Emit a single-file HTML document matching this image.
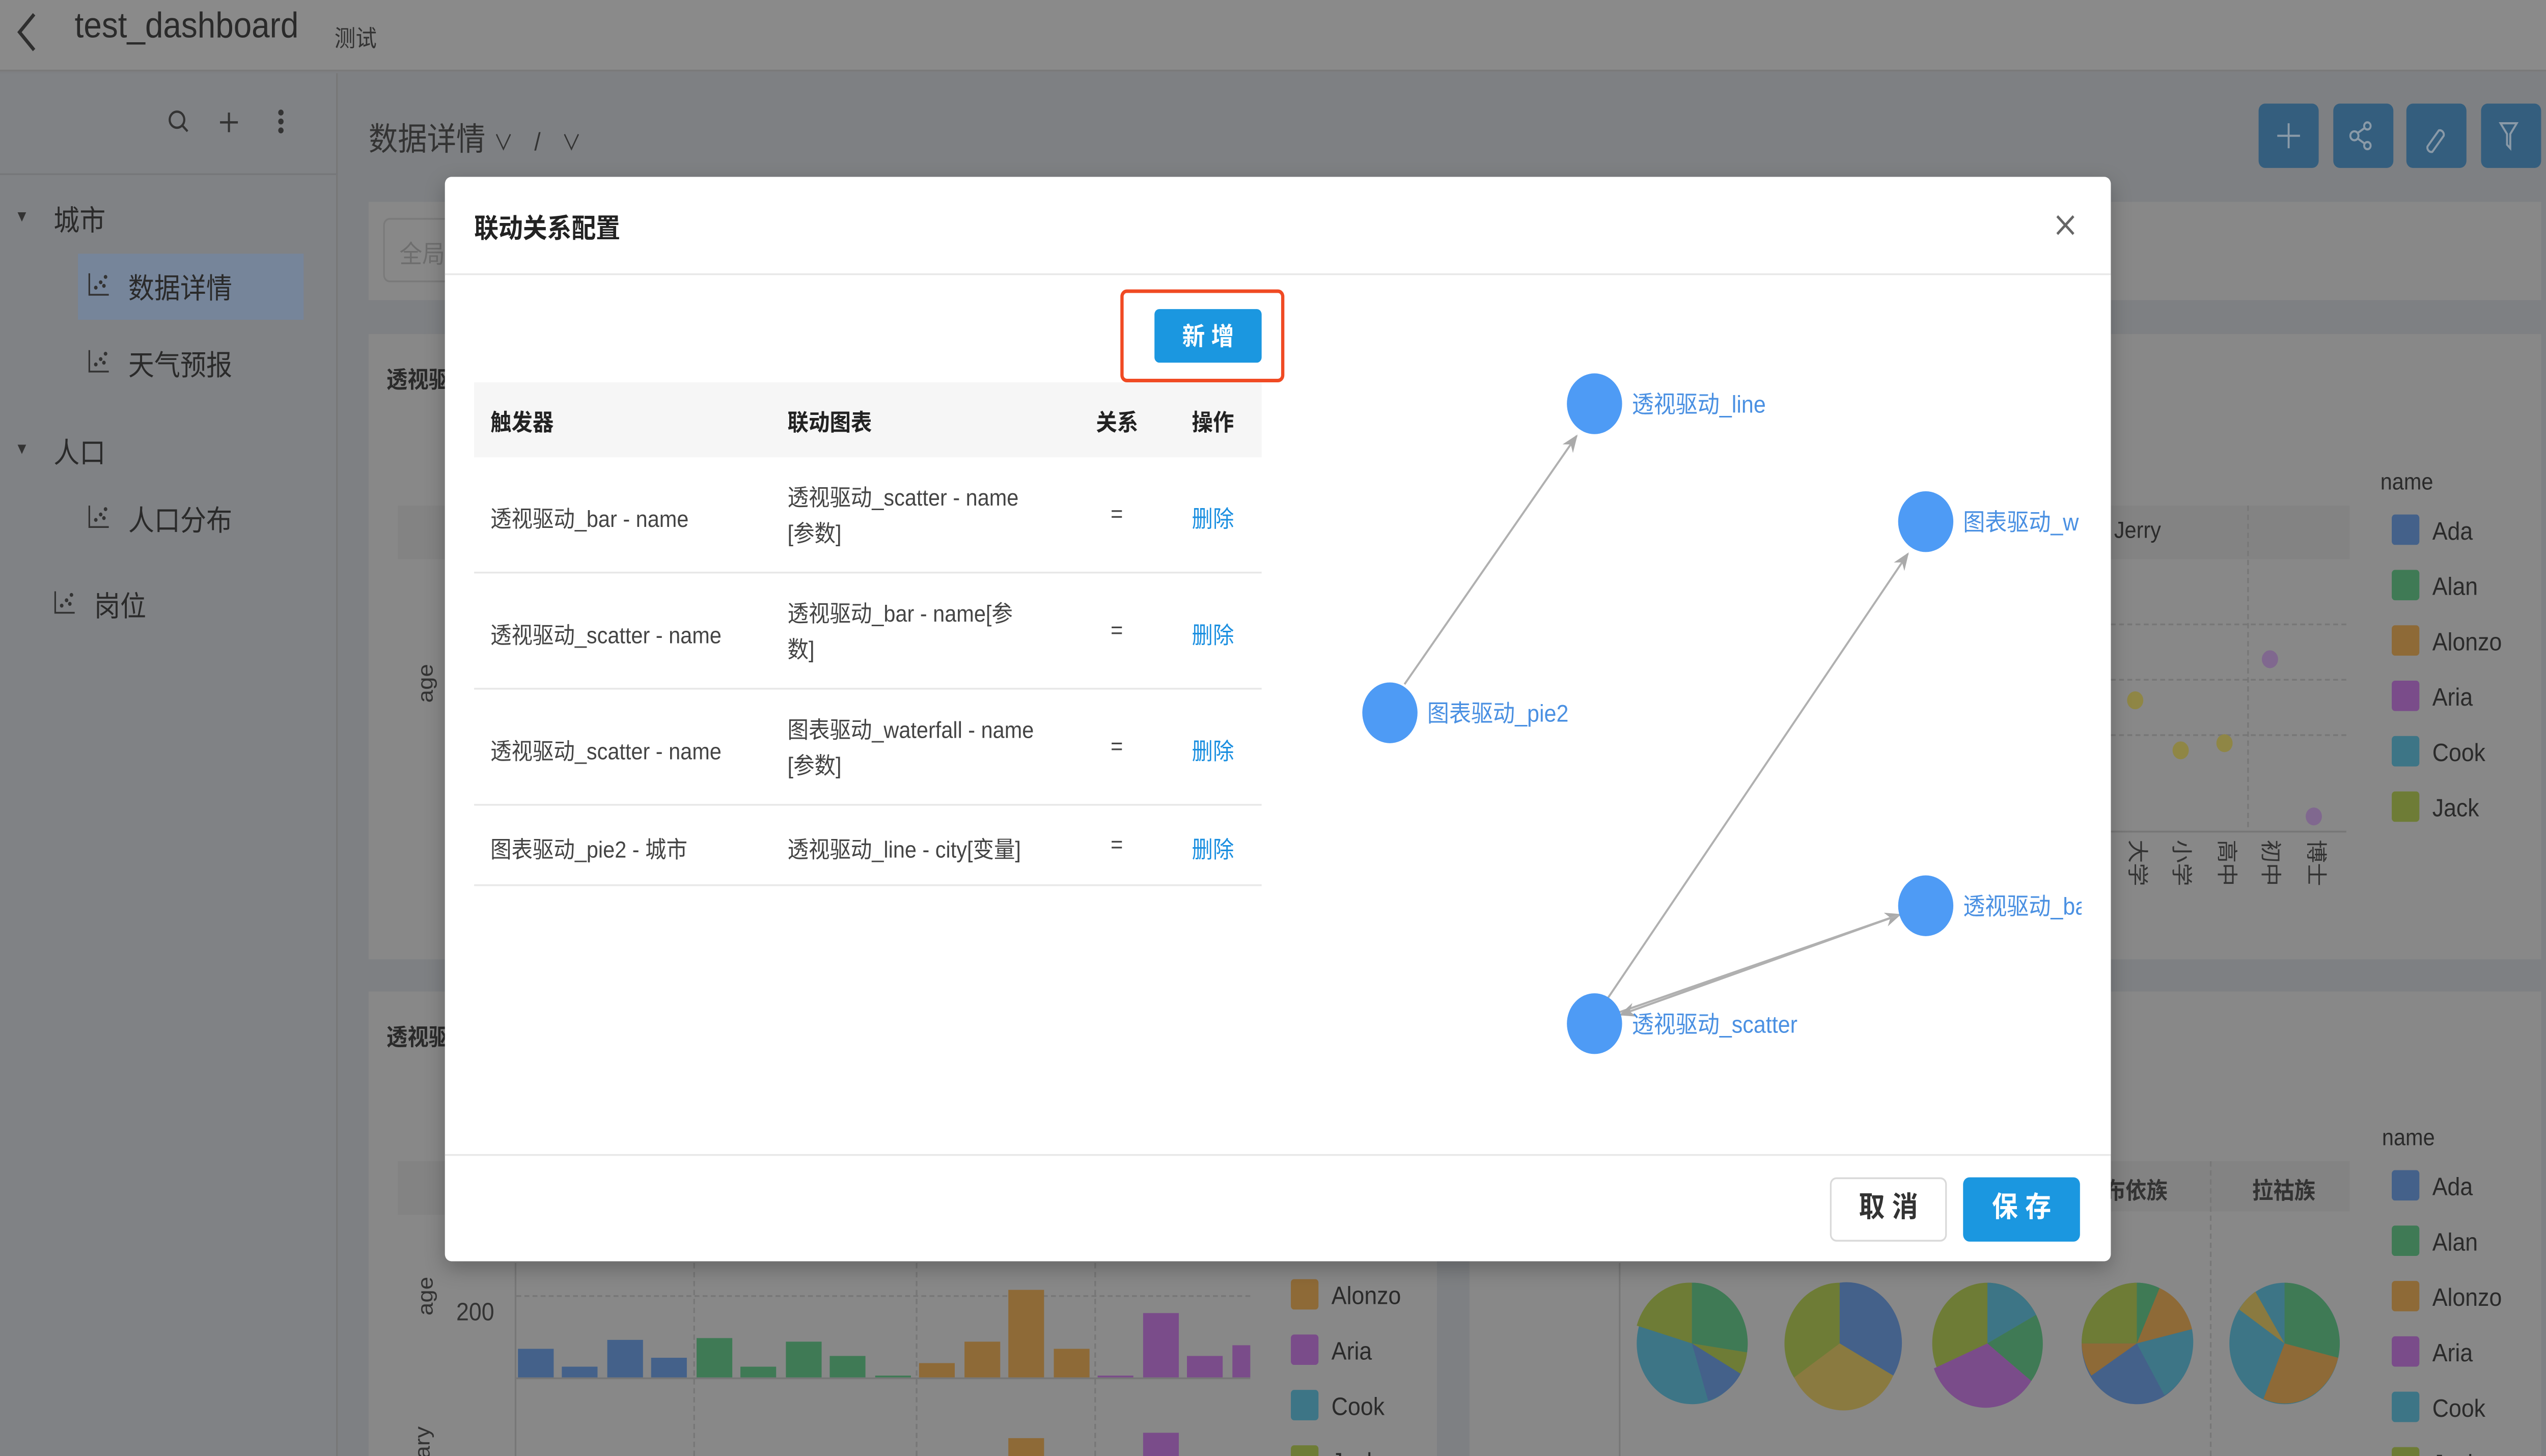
<!DOCTYPE html>
<html><head><meta charset="utf-8"><style>
*{margin:0;padding:0;box-sizing:border-box}
html,body{width:100%;height:100%;overflow:hidden;background:#7e8083}
#w{position:absolute;left:0;top:0;width:1568px;height:815px;transform:scale(3.5077);transform-origin:0 0;overflow:hidden;font-family:"Liberation Sans","Noto Sans CJK SC",sans-serif;color:#333}
.a{position:absolute}
.t{position:absolute;white-space:nowrap}
.v{writing-mode:vertical-rl;text-orientation:sideways}
</style></head><body><div id="w">
<div class="a" style="left:0;top:0;width:1568px;height:40px;background:#8a8a8a;border-bottom:1px solid #7a7a7a"></div>
<svg class="a" style="left:6px;top:6px" width="20" height="24"><path d="M15 2 L6 12 L15 22" stroke="#2e2e2e" stroke-width="2" fill="none"/></svg>
<div class="t" style="left:46px;top:4px;font-size:20px;color:#2a2a2a">test_dashboard</div>
<div class="t" style="left:206px;top:11px;font-size:13px;color:#333">测试</div>
<div class="a" style="left:0;top:41px;width:208px;height:774px;background:#808285;border-right:1px solid #777"></div>
<div class="a" style="left:0;top:97px;width:208px;height:1px;background:#76777a"></div>
<svg class="a" style="left:100px;top:60px" width="90" height="18" fill="none" stroke="#333" stroke-width="1.3"><circle cx="9" cy="7" r="4.5"/><path d="M12.5 10.5l3 3"/><path d="M41 3v11M35.5 8.5h11"/><circle cx="73" cy="3" r="1" fill="#333"/><circle cx="73" cy="8" r="1" fill="#333"/><circle cx="73" cy="13" r="1" fill="#333"/></svg>
<div class="a" style="left:48px;top:142px;width:139px;height:37px;background:#76859a"></div>
<div class="t" style="left:9px;top:116px;font-size:9px;color:#333">▼</div>
<div class="t" style="left:33px;top:110px;font-size:16px;color:#2a2a2a">城市</div>
<div class="t" style="left:9px;top:246px;font-size:9px;color:#333">▼</div>
<div class="t" style="left:33px;top:240px;font-size:16px;color:#2a2a2a">人口</div>
<svg class="a" style="left:54px;top:152px" width="14" height="14" fill="none" stroke="#333" stroke-width="1"><path d="M1 1v12h12"/><circle cx="5" cy="9" r=".6" fill="#333"/><circle cx="8" cy="6" r=".6" fill="#333"/><circle cx="11" cy="3" r=".6" fill="#333"/><circle cx="10" cy="8" r=".6" fill="#333"/></svg>
<svg class="a" style="left:54px;top:195px" width="14" height="14" fill="none" stroke="#333" stroke-width="1"><path d="M1 1v12h12"/><circle cx="5" cy="9" r=".6" fill="#333"/><circle cx="8" cy="6" r=".6" fill="#333"/><circle cx="11" cy="3" r=".6" fill="#333"/><circle cx="10" cy="8" r=".6" fill="#333"/></svg>
<svg class="a" style="left:54px;top:282px" width="14" height="14" fill="none" stroke="#333" stroke-width="1"><path d="M1 1v12h12"/><circle cx="5" cy="9" r=".6" fill="#333"/><circle cx="8" cy="6" r=".6" fill="#333"/><circle cx="11" cy="3" r=".6" fill="#333"/><circle cx="10" cy="8" r=".6" fill="#333"/></svg>
<svg class="a" style="left:33px;top:330px" width="14" height="14" fill="none" stroke="#333" stroke-width="1"><path d="M1 1v12h12"/><circle cx="5" cy="9" r=".6" fill="#333"/><circle cx="8" cy="6" r=".6" fill="#333"/><circle cx="11" cy="3" r=".6" fill="#333"/><circle cx="10" cy="8" r=".6" fill="#333"/></svg>
<div class="t" style="left:79px;top:148px;font-size:16px;color:#2a2a2a">数据详情</div>
<div class="t" style="left:79px;top:191px;font-size:16px;color:#2a2a2a">天气预报</div>
<div class="t" style="left:79px;top:278px;font-size:16px;color:#2a2a2a">人口分布</div>
<div class="t" style="left:58px;top:326px;font-size:16px;color:#2a2a2a">岗位</div>
<div class="t" style="left:227px;top:64px;font-size:18px;color:#333">数据详情 <span style="font-size:12px">∨</span> <span style="font-size:14px;margin:0 8px">/</span> <span style="font-size:12px">∨</span></div>
<div class="a" style="left:1391px;top:58px;width:37px;height:36px;background:#345e7e;border-radius:4px"></div>
<div class="a" style="left:1437px;top:58px;width:37px;height:36px;background:#345e7e;border-radius:4px"></div>
<div class="a" style="left:1482px;top:58px;width:37px;height:36px;background:#345e7e;border-radius:4px"></div>
<div class="a" style="left:1528px;top:58px;width:37px;height:36px;background:#345e7e;border-radius:4px"></div>
<svg class="a" style="left:1391px;top:58px" width="176" height="36" fill="none" stroke="#8a9aa8" stroke-width="1.2"><path d="M18.5 11v14M11.5 18h14"/><circle cx="59" cy="18" r="2.5"/><circle cx="67" cy="12.5" r="2"/><circle cx="67" cy="23.5" r="2"/><path d="M61 16.5l4.5-3M61 19.5l4.5 3"/><path d="M104 24l7-9a2.5 2.5 0 0 1 3 3l-7 9a2.5 2.5 0 0 1-3-3z"/><path d="M149 11h10l-4 6v8l-2-2v-6z"/></svg>
<div class="a" style="left:227px;top:113px;width:1338px;height:55px;background:#888"></div>
<div class="a" style="left:236px;top:122px;width:60px;height:36px;border:1px solid #7a7a7a;border-radius:4px"></div>
<div class="t" style="left:246px;top:132px;font-size:14px;color:#6e6e6e">全局</div>
<div class="a" style="left:227px;top:187px;width:1338px;height:350px;background:#888"></div>
<div class="t" style="left:238px;top:202px;font-size:13px;font-weight:bold;color:#2a2a2a">透视驱</div>
<div class="a" style="left:245px;top:283px;width:40px;height:30px;background:#838383"></div>
<div class="t" style="left:251px;top:375px;font-size:13px;color:#333;transform:rotate(-90deg)">age</div>
<div class="a" style="left:1300px;top:283px;width:147px;height:30px;background:#838383"></div>
<div class="t" style="left:1302px;top:289px;font-size:13px;color:#2a2a2a">Jerry</div>
<div class="a" style="left:1384px;top:283px;width:1px;height:180px;border-left:1px dashed #777"></div>
<div class="a" style="left:1300px;top:349px;width:145px;border-top:1px dashed #777"></div>
<div class="a" style="left:1300px;top:380px;width:145px;border-top:1px dashed #777"></div>
<div class="a" style="left:1300px;top:411px;width:145px;border-top:1px dashed #777"></div>
<div class="a" style="left:1300px;top:465px;width:145px;border-top:1px solid #777"></div>
<svg class="a" style="left:1300px;top:350px" width="150" height="115"><circle cx="15" cy="42" r="5" fill="#8f8645"/><circle cx="43" cy="70" r="5" fill="#8f8645"/><circle cx="70" cy="66" r="5" fill="#8f8645"/><circle cx="98" cy="19" r="5" fill="#80688f"/><circle cx="125" cy="107" r="5" fill="#80688f"/></svg>
<div class="t v" style="left:1308px;top:470px;font-size:13px;color:#333">大学</div>
<div class="t v" style="left:1335px;top:470px;font-size:13px;color:#333">小学</div>
<div class="t v" style="left:1363px;top:470px;font-size:13px;color:#333">高中</div>
<div class="t v" style="left:1390px;top:470px;font-size:13px;color:#333">初中</div>
<div class="t v" style="left:1418px;top:470px;font-size:13px;color:#333">博士</div>
<div class="t" style="left:1466px;top:262px;font-size:13px;color:#2a2a2a">name</div>
<div class="a" style="left:1473px;top:282px;font-size:14px;color:#2a2a2a;line-height:31px">
<div><span style="display:inline-block;width:17px;height:17px;background:#44618a;border-radius:2px;vertical-align:-3px;margin-right:8px"></span>Ada</div>
<div><span style="display:inline-block;width:17px;height:17px;background:#3f7a55;border-radius:2px;vertical-align:-3px;margin-right:8px"></span>Alan</div>
<div><span style="display:inline-block;width:17px;height:17px;background:#8e6a37;border-radius:2px;vertical-align:-3px;margin-right:8px"></span>Alonzo</div>
<div><span style="display:inline-block;width:17px;height:17px;background:#7a4c8a;border-radius:2px;vertical-align:-3px;margin-right:8px"></span>Aria</div>
<div><span style="display:inline-block;width:17px;height:17px;background:#3d7586;border-radius:2px;vertical-align:-3px;margin-right:8px"></span>Cook</div>
<div><span style="display:inline-block;width:17px;height:17px;background:#6e7c36;border-radius:2px;vertical-align:-3px;margin-right:8px"></span>Jack</div>
</div>
<div class="a" style="left:227px;top:555px;width:658px;height:260px;background:#888"></div>
<div class="a" style="left:905px;top:555px;width:660px;height:260px;background:#888"></div>
<div class="t" style="left:238px;top:570px;font-size:13px;font-weight:bold;color:#2a2a2a">透视驱</div>
<div class="a" style="left:245px;top:650px;width:40px;height:30px;background:#838383"></div>
<div class="t" style="left:251px;top:718px;font-size:13px;color:#333;transform:rotate(-90deg)">age</div>
<div class="t" style="left:281px;top:726px;font-size:14px;color:#333">200</div>
<div class="t" style="left:251px;top:800px;font-size:13px;color:#333;transform:rotate(-90deg)">ary</div>
<div class="a" style="left:317px;top:707px;width:1px;height:108px;background:#777"></div>
<div class="a" style="left:318px;top:725px;width:452px;border-top:1px dashed #777"></div>
<div class="a" style="left:427px;top:707px;height:108px;border-left:1px dashed #777"></div>
<div class="a" style="left:564px;top:707px;height:108px;border-left:1px dashed #777"></div>
<div class="a" style="left:674px;top:707px;height:108px;border-left:1px dashed #777"></div>
<div class="a" style="left:318px;top:771px;width:452px;height:1px;background:#777"></div>
<svg class="a" style="left:318px;top:700px" width="460" height="115">
<rect x="1" y="55" width="22" height="16" fill="#44618a"/><rect x="28" y="65" width="22" height="6" fill="#44618a"/><rect x="56" y="50" width="22" height="21" fill="#44618a"/><rect x="83" y="60" width="22" height="11" fill="#44618a"/>
<rect x="111" y="49" width="22" height="22" fill="#3f7a55"/><rect x="138" y="65" width="22" height="6" fill="#3f7a55"/><rect x="166" y="51" width="22" height="20" fill="#3f7a55"/><rect x="193" y="59" width="22" height="12" fill="#3f7a55"/><rect x="221" y="70" width="22" height="1" fill="#3f7a55"/>
<rect x="248" y="63" width="22" height="8" fill="#8e6a37"/><rect x="276" y="51" width="22" height="20" fill="#8e6a37"/><rect x="303" y="22" width="22" height="49" fill="#8e6a37"/><rect x="331" y="55" width="22" height="16" fill="#8e6a37"/>
<rect x="358" y="70" width="22" height="1" fill="#7a4c8a"/><rect x="386" y="35" width="22" height="36" fill="#7a4c8a"/><rect x="413" y="59" width="22" height="12" fill="#7a4c8a"/><rect x="441" y="53" width="11" height="18" fill="#7a4c8a"/>
<rect x="303" y="105" width="22" height="10" fill="#8e6a37"/><rect x="386" y="102" width="22" height="13" fill="#7a4c8a"/></svg>
<div class="a" style="left:795px;top:710px;font-size:14px;color:#2a2a2a;line-height:31px">
<div><span style="display:inline-block;width:17px;height:17px;background:#8e6a37;border-radius:2px;vertical-align:-3px;margin-right:8px"></span>Alonzo</div>
<div><span style="display:inline-block;width:17px;height:17px;background:#7a4c8a;border-radius:2px;vertical-align:-3px;margin-right:8px"></span>Aria</div>
<div><span style="display:inline-block;width:17px;height:17px;background:#3d7586;border-radius:2px;vertical-align:-3px;margin-right:8px"></span>Cook</div>
<div><span style="display:inline-block;width:17px;height:17px;background:#6e7c36;border-radius:2px;vertical-align:-3px;margin-right:8px"></span>Jack</div>
</div>
<div class="a" style="left:1290px;top:650px;width:157px;height:28px;background:#838383"></div>
<div class="t" style="left:1296px;top:656px;font-size:13px;font-weight:bold;color:#333">布依族</div>
<div class="t" style="left:1387px;top:656px;font-size:13px;font-weight:bold;color:#333">拉祜族</div>
<div class="a" style="left:1361px;top:650px;height:165px;border-left:1px dashed #777"></div>
<div class="a" style="left:997px;top:707px;height:108px;border-left:1px solid #777"></div>
<div class="t" style="left:1467px;top:629px;font-size:13px;color:#2a2a2a">name</div>
<div class="a" style="left:1473px;top:649px;font-size:14px;color:#2a2a2a;line-height:31px">
<div><span style="display:inline-block;width:17px;height:17px;background:#44618a;border-radius:2px;vertical-align:-3px;margin-right:8px"></span>Ada</div>
<div><span style="display:inline-block;width:17px;height:17px;background:#3f7a55;border-radius:2px;vertical-align:-3px;margin-right:8px"></span>Alan</div>
<div><span style="display:inline-block;width:17px;height:17px;background:#8e6a37;border-radius:2px;vertical-align:-3px;margin-right:8px"></span>Alonzo</div>
<div><span style="display:inline-block;width:17px;height:17px;background:#7a4c8a;border-radius:2px;vertical-align:-3px;margin-right:8px"></span>Aria</div>
<div><span style="display:inline-block;width:17px;height:17px;background:#3d7586;border-radius:2px;vertical-align:-3px;margin-right:8px"></span>Cook</div>
<div><span style="display:inline-block;width:17px;height:17px;background:#6e7c36;border-radius:2px;vertical-align:-3px;margin-right:8px"></span>Jack</div>
</div>
<svg class="a" style="left:1000px;top:710px" width="460" height="85">
<g transform="translate(42,42)"><circle r="34" fill="#3d7586"/><path d="M0 0V-34A34 34 0 0 1 34 5Z" fill="#3f7a55"/><path d="M0 0L34 5A34 34 0 0 1 30 17Z" fill="#6e7c36"/><path d="M0 0L30 17A34 34 0 0 1 10 32Z" fill="#44618a"/><path d="M0 0L-34-10A34 34 0 0 1 0-34Z" fill="#6e7c36"/></g>
<g transform="translate(133,42)"><circle r="34" fill="#6e7c36"/><path d="M0 0V-34A34 34 0 0 1 33 18Z" fill="#44618a"/><path d="M0 0L33 18A34 34 0 0 1 -28 19Z" fill="#8a7a40"/></g>
<g transform="translate(224,42)"><circle r="34" fill="#6e7c36"/><path d="M0 0V-34A34 34 0 0 1 30-16Z" fill="#3d7586"/><path d="M0 0L30-16A34 34 0 0 1 27 21Z" fill="#3f7a55"/><path d="M0 0L27 21A34 34 0 0 1 -33 14Z" fill="#7a4c8a"/></g>
<g transform="translate(316,42)"><circle r="34" fill="#44618a"/><path d="M0 0V-34A34 34 0 0 1 14-31Z" fill="#3f7a55"/><path d="M0 0L14-31A34 34 0 0 1 34-8Z" fill="#8e6a37"/><path d="M0 0L34-8A34 34 0 0 1 17 29Z" fill="#3d7586"/><path d="M0 0L-28 18A34 34 0 0 1 -34 0Z" fill="#8e6a37"/><path d="M0 0H-34A34 34 0 0 1 0-34Z" fill="#6e7c36"/></g>
<g transform="translate(407,42)"><circle r="34" fill="#3d7586"/><path d="M0 0V-34A34 34 0 0 1 33 8Z" fill="#3f7a55"/><path d="M0 0L33 8A34 34 0 0 1 -13 31Z" fill="#8e6a37"/><path d="M0 0L-28-19A34 34 0 0 1 -18-29Z" fill="#8a7a40"/></g>
</svg>
<div class="a" style="left:274px;top:99px;width:1026px;height:607px;background:#fff;border-radius:4px;box-shadow:0 4px 12px rgba(0,0,0,.25);overflow:hidden">
<div class="t" style="left:18px;top:18px;font-size:15px;font-weight:bold;color:#222">联动关系配置</div>
<svg class="a" style="left:991px;top:20px" width="14" height="14" stroke="#666" stroke-width="1.5"><path d="M2 2L12 12M12 2L2 12"/></svg>
<div class="a" style="left:0;top:54px;width:1026px;height:1px;background:#e8e8e8"></div>
<div class="a" style="left:416px;top:63px;width:101px;height:52px;border:2px solid #f04a23;border-radius:4px"></div>
<div class="a" style="left:437px;top:74px;width:66px;height:30px;background:#1b97e0;border-radius:3px;color:#fff;font-size:14px;font-weight:bold;text-align:center;line-height:30px">新 增</div>
<div class="a" style="left:18px;top:115px;width:485px;height:42px;background:#f6f6f6"></div>
<div class="t" style="left:28px;top:127px;font-size:13px;font-weight:bold;color:#222">触发器</div>
<div class="t" style="left:211px;top:127px;font-size:13px;font-weight:bold;color:#222">联动图表</div>
<div class="t" style="left:401px;top:127px;font-size:13px;font-weight:bold;color:#222">关系</div>
<div class="t" style="left:460px;top:127px;font-size:13px;font-weight:bold;color:#222">操作</div>
<div class="a" style="left:18px;top:221px;width:485px;height:1px;background:#e8e8e8"></div>
<div class="a" style="left:18px;top:286px;width:485px;height:1px;background:#e8e8e8"></div>
<div class="a" style="left:18px;top:351px;width:485px;height:1px;background:#e8e8e8"></div>
<div class="a" style="left:18px;top:396px;width:485px;height:1px;background:#e8e8e8"></div>
<div class="a" style="left:0;top:0;font-size:13px;color:#444">
<div class="t" style="left:28px;top:181px">透视驱动_bar - name</div>
<div class="a" style="left:211px;top:170px;line-height:20px;width:170px">透视驱动_scatter - name<br>[参数]</div>
<div class="t" style="left:28px;top:246px">透视驱动_scatter - name</div>
<div class="a" style="left:211px;top:235px;line-height:20px;width:170px">透视驱动_bar - name[参<br>数]</div>
<div class="t" style="left:28px;top:311px">透视驱动_scatter - name</div>
<div class="a" style="left:211px;top:300px;line-height:20px;width:180px">图表驱动_waterfall - name<br>[参数]</div>
<div class="t" style="left:28px;top:366px">图表驱动_pie2 - 城市</div>
<div class="t" style="left:211px;top:366px">透视驱动_line - city[变量]</div>
<div class="t" style="left:410px;top:181px">=</div><div class="t" style="left:410px;top:246px">=</div><div class="t" style="left:410px;top:311px">=</div><div class="t" style="left:410px;top:366px">=</div>
<div class="t" style="left:460px;top:181px;color:#1b8fe0">删除</div><div class="t" style="left:460px;top:246px;color:#1b8fe0">删除</div><div class="t" style="left:460px;top:311px;color:#1b8fe0">删除</div><div class="t" style="left:460px;top:366px;color:#1b8fe0">删除</div>
</div>
<svg class="a" style="left:0;top:0" width="1008" height="540">
<defs><marker id="m" markerWidth="10" markerHeight="8" refX="9" refY="4" orient="auto" markerUnits="userSpaceOnUse"><path d="M0 0L10 4L0 8L3 4Z" fill="#aaa"/></marker></defs>
<g stroke="#b0b0b0" stroke-width="1.2" fill="none">
<path d="M591 284L697 145" marker-end="url(#m)"/>
<path d="M716 460L901 211" marker-end="url(#m)"/>
<path d="M722 468L896 413" marker-end="url(#m)"/>
<path d="M896 413L724 469" marker-end="url(#m)"/>
</g>
<g fill="#4e9bf5"><circle cx="708" cy="127" r="17"/><circle cx="912" cy="193" r="17"/><circle cx="582" cy="300" r="17"/><circle cx="912" cy="408" r="17"/><circle cx="708" cy="474" r="17"/></g>
<g font-size="13.5" fill="#4a90e2" font-family="Liberation Sans,Noto Sans CJK SC,sans-serif"><text x="731" y="132">透视驱动_line</text><text x="935" y="198">图表驱动_w</text><text x="605" y="305">图表驱动_pie2</text><text x="935" y="413">透视驱动_ba</text><text x="731" y="479">透视驱动_scatter</text></g>
</svg>
<div class="a" style="left:1008px;top:55px;width:18px;height:492px;background:#fff"></div>
<div class="a" style="left:0;top:547px;width:1026px;height:1px;background:#e8e8e8"></div>
<div class="a" style="left:853px;top:560px;width:72px;height:36px;border:1px solid #d9d9d9;border-radius:4px;text-align:center;line-height:34px;font-size:16px;font-weight:bold;color:#333">取 消</div>
<div class="a" style="left:935px;top:560px;width:72px;height:36px;background:#1b97e0;border-radius:4px;text-align:center;line-height:36px;font-size:16px;font-weight:bold;color:#fff">保 存</div>
</div>
</div>
<script>
(function(){var w=document.getElementById('w');function f(){var W=document.documentElement.clientWidth||window.innerWidth,H=document.documentElement.clientHeight||window.innerHeight;if(W>0&&H>0){w.style.transform='scale('+(W/1568)+','+(H/815)+')';}}f();window.addEventListener('resize',f);})();
</script>
</body></html>
